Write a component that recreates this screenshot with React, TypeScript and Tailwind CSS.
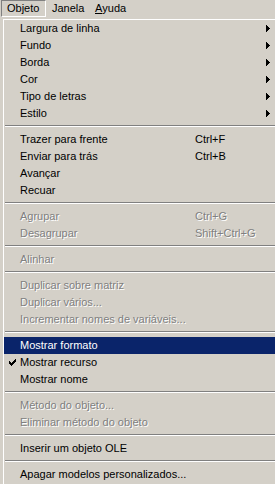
import React from 'react'

type Entry =
  | { sep: true }
  | {
      sep?: false
      label: string
      shortcut?: string
      sub?: boolean
      disabled?: boolean
      checked?: boolean
      active?: boolean
    }

const entries: Entry[] = [
  { label: 'Largura de linha', sub: true },
  { label: 'Fundo', sub: true },
  { label: 'Borda', sub: true },
  { label: 'Cor', sub: true },
  { label: 'Tipo de letras', sub: true },
  { label: 'Estilo', sub: true },
  { sep: true },
  { label: 'Trazer para frente', shortcut: 'Ctrl+F' },
  { label: 'Enviar para trás', shortcut: 'Ctrl+B' },
  { label: 'Avançar' },
  { label: 'Recuar' },
  { sep: true },
  { label: 'Agrupar', shortcut: 'Ctrl+G', disabled: true },
  { label: 'Desagrupar', shortcut: 'Shift+Ctrl+G', disabled: true },
  { sep: true },
  { label: 'Alinhar', disabled: true },
  { sep: true },
  { label: 'Duplicar sobre matriz', disabled: true },
  { label: 'Duplicar vários...', disabled: true },
  { label: 'Incrementar nomes de variáveis...', disabled: true },
  { sep: true },
  { label: 'Mostrar formato', active: true },
  { label: 'Mostrar recurso', checked: true },
  { label: 'Mostrar nome' },
  { sep: true },
  { label: 'Método do objeto...', disabled: true },
  { label: 'Eliminar método do objeto', disabled: true },
  { sep: true },
  { label: 'Inserir um objeto OLE' },
  { sep: true },
  { label: 'Apagar modelos personalizados...' },
]

const Check = () => (
  <svg width="7" height="7" viewBox="0 0 7 7" className="absolute left-[5px] top-[5px]" shapeRendering="crispEdges">
    <path d="M0 2h1v3h-1zM1 3h1v3h-1zM2 4h1v3h-1zM3 3h1v3h-1zM4 2h1v3h-1zM5 1h1v3h-1zM6 0h1v3h-1z" fill="#000" />
  </svg>
)

const Arrow = ({ color }: { color: string }) => (
  <svg width="4" height="7" viewBox="0 0 4 7" shapeRendering="crispEdges">
    <path d="M0 0h1v7h-1zM1 1h1v5h-1zM2 2h1v3h-1zM3 3h1v1h-1z" fill={color} />
  </svg>
)

const App: React.FC = () => {
  return (
    <div
      className="relative w-[275px] h-[484px] overflow-hidden bg-[#d4d0c8] text-[11px] leading-none text-black"
      style={{ fontFamily: '"Liberation Sans", Arial, sans-serif' }}
    >
      {/* menu bar */}
      <div className="flex h-[18px] items-start">
        <div className="ml-[1px] flex h-[17px] w-[45px] items-center border-t border-l border-t-[#808080] border-l-[#808080] border-b border-r border-b-white border-r-white pl-[5px]">
          Objeto
        </div>
        <div className="flex h-[17px] w-[43px] items-center pl-[6px]">Janela</div>
        <div className="flex h-[17px] items-center pl-[6px]">
          <span className="underline underline-offset-1">A</span>yuda
        </div>
      </div>

      {/* dropdown */}
      <div className="absolute left-[2px] top-[18px] w-[300px] border-t border-l border-t-[#d4d0c8] border-l-[#d4d0c8] border-b border-r border-b-[#404040] border-r-[#404040] bg-[#d4d0c8] shadow-[inset_1px_1px_#fff,inset_-1px_-1px_#808080] px-[1px] pb-[2px] pt-[1px]">
        {entries.map((e, i) => {
          if (e.sep) {
            return (
              <div key={i} className="h-[9px] px-[1px] pt-[3px]">
                <div className="h-px bg-[#808080]" />
                <div className="h-px bg-white" />
              </div>
            )
          }
          const color = e.active ? 'text-white' : e.disabled ? 'text-[#808080]' : 'text-black'
          const shadow = e.disabled ? '[text-shadow:1px_1px_0_#fff]' : ''
          return (
            <div
              key={i}
              className={`relative flex h-[17px] items-center ${e.active ? 'bg-[#0a246a]' : ''} ${color} ${shadow}`}
            >
              {e.checked && <Check />}
              <div className="w-[191px] shrink-0 whitespace-nowrap pl-[16px]">{e.label}</div>
              <div className="w-[71px] shrink-0 whitespace-nowrap">{e.shortcut}</div>
              {e.sub && <Arrow color={e.active ? '#fff' : '#000'} />}
            </div>
          )
        })}
      </div>
    </div>
  )
}

export default App
